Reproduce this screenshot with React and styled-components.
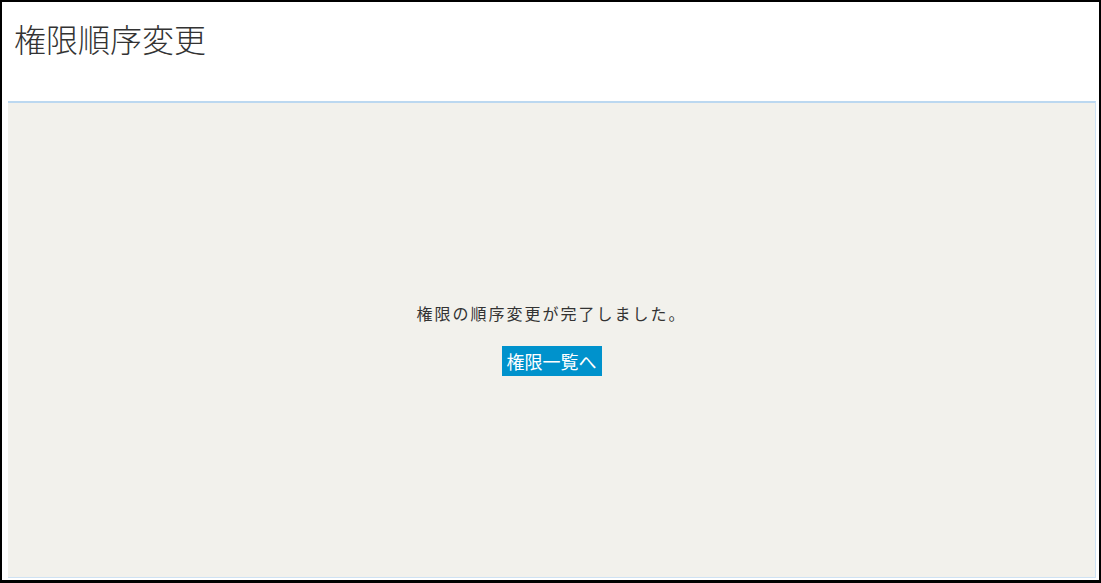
import React from "react";
import styled, { createGlobalStyle } from "styled-components";

const GlobalStyle = createGlobalStyle`
  html, body {
    margin: 0;
    padding: 0;
    background: #fff;
  }
  body {
    font-family: "Noto Sans CJK JP", "Noto Sans", sans-serif;
    color: #333;
  }
`;

const Frame = styled.div`
  box-sizing: border-box;
  width: 1101px;
  height: 583px;
  border: 2px solid #000;
  border-bottom-width: 3px;
  display: flex;
  flex-direction: column;
  padding: 0 3px 2px 6px;
  background: #fff;
`;

const Header = styled.header`
  height: 99px;
  flex-shrink: 0;
`;

const Title = styled.h1`
  margin: 0;
  padding: 14px 0 0 6px;
  font-size: 32px;
  line-height: 44px;
  font-weight: 300;
  color: #333;
`;

const Panel = styled.main`
  flex: 1;
  background: #f2f1ec;
  border-top: 2px solid #bcd8f0;
  border-right: 1px solid #cfe2f3;
  border-bottom: 1px solid #cfe2f3;
  display: flex;
  flex-direction: column;
  align-items: center;
  justify-content: center;
  gap: 21px;
  padding-bottom: 4px;
`;

const Message = styled.p`
  margin: 0;
  font-size: 16px;
  line-height: 24px;
  letter-spacing: 2px;
  color: #333;
`;

const Button = styled.button`
  border: none;
  background: #0092cc;
  color: #fff;
  font-family: inherit;
  font-size: 18px;
  line-height: 30px;
  height: 30px;
  padding: 0 5px;
  cursor: pointer;
`;

const App = () => {
  return (
    <>
      <GlobalStyle />
      <Frame>
        <Header>
          <Title>権限順序変更</Title>
        </Header>
        <Panel>
          <Message>権限の順序変更が完了しました。</Message>
          <Button>権限一覧へ</Button>
        </Panel>
      </Frame>
    </>
  );
};

export default App;
